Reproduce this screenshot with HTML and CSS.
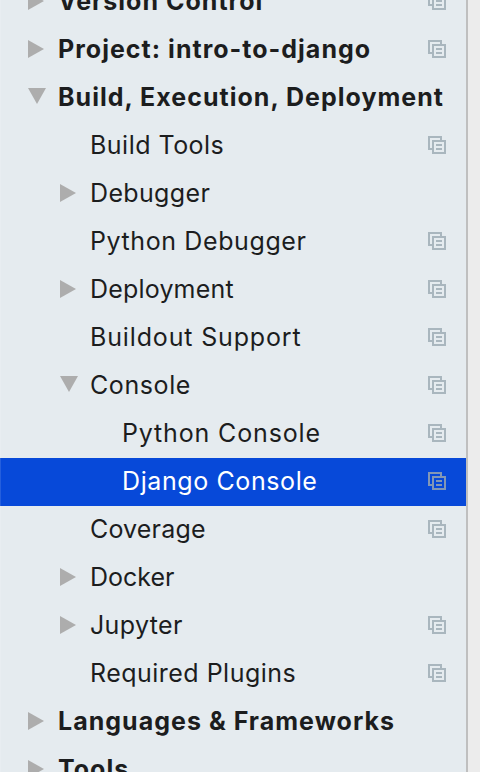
FILE: index.html
```
<!DOCTYPE html>
<html lang="en">
<head>
<meta charset="utf-8">
<title>Settings</title>
<link rel="stylesheet" href="styles.css">
</head>
<body>
<svg class="defs" aria-hidden="true">
<symbol id="copy" viewBox="0 0 18 18"><path d="M4 13H1V1H13V4" /><path d="M5 5H17V17H5Z" /><path d="M8 9H14M8 13H14" /></symbol>
<symbol id="right" viewBox="0 0 16 18"><path d="M0 0L16 9L0 18Z" /></symbol>
<symbol id="down" viewBox="0 0 18 16"><path d="M0 0H18L9 16Z" /></symbol>
</svg>
<div class="window">
<nav class="tree">
<div class="row group"><svg class="right"><use href="#right"/></svg><span class="label">Version Control</span><svg class="copy"><use href="#copy"/></svg></div>
<div class="row group"><svg class="right"><use href="#right"/></svg><span class="label">Project: intro-to-django</span><svg class="copy"><use href="#copy"/></svg></div>
<div class="row group"><svg class="down"><use href="#down"/></svg><span class="label">Build, Execution, Deployment</span></div>
<div class="row item"><span class="label">Build Tools</span><svg class="copy"><use href="#copy"/></svg></div>
<div class="row item"><svg class="right"><use href="#right"/></svg><span class="label snug">Debugger</span></div>
<div class="row item"><span class="label roomy">Python Debugger</span><svg class="copy"><use href="#copy"/></svg></div>
<div class="row item"><svg class="right"><use href="#right"/></svg><span class="label tight">Deployment</span><svg class="copy"><use href="#copy"/></svg></div>
<div class="row item"><span class="label wide">Buildout Support</span><svg class="copy"><use href="#copy"/></svg></div>
<div class="row item"><svg class="down"><use href="#down"/></svg><span class="label roomy">Console</span><svg class="copy"><use href="#copy"/></svg></div>
<div class="row leaf"><span class="label wide">Python Console</span><svg class="copy"><use href="#copy"/></svg></div>
<div class="row leaf selected"><span class="label roomy">Django Console</span><svg class="copy"><use href="#copy"/></svg></div>
<div class="row item"><span class="label tight">Coverage</span><svg class="copy"><use href="#copy"/></svg></div>
<div class="row item"><svg class="right"><use href="#right"/></svg><span class="label flush">Docker</span></div>
<div class="row item"><svg class="right"><use href="#right"/></svg><span class="label snug">Jupyter</span><svg class="copy"><use href="#copy"/></svg></div>
<div class="row item"><span class="label">Required Plugins</span><svg class="copy"><use href="#copy"/></svg></div>
<div class="row group"><svg class="right"><use href="#right"/></svg><span class="label">Languages &amp; Frameworks</span></div>
<div class="row group"><svg class="right"><use href="#right"/></svg><span class="label">Tools</span></div>
</nav>
</div>
</body>
</html>
```
FILE: styles.css
```
body { margin: 0; background: #ececec; font-family: Inter, sans-serif; color: #1c1d1e; }
.defs { display: none; }
.window { height: 772px; overflow: hidden; }
.tree { width: 466px; height: 795px; margin-top: -22px; background: #e5ebef; border-right: 2px solid #bfbfbf; }
.row { position: relative; box-sizing: border-box; display: flex; align-items: center; height: 48px; padding-bottom: 2px; font-size: 25px; letter-spacing: 0.48px; white-space: nowrap; box-shadow: inset 1px 0 rgba(255, 255, 255, 0.12); }
.group { padding-left: 58px; font-weight: 700; letter-spacing: 1.02px; }
.item { padding-left: 90px; }
.leaf { padding-left: 122px; }
.label { line-height: 46px; }
.flush { letter-spacing: 0; }
.tight { letter-spacing: 0.18px; }
.snug { letter-spacing: 0.35px; }
.roomy { letter-spacing: 0.6px; }
.wide { letter-spacing: 0.85px; }
.right, .down { position: absolute; top: 14px; left: 28px; fill: #adadad; }
.right { width: 16px; height: 18px; }
.down { width: 18px; height: 16px; }
.item .right, .item .down { left: 60px; }
.copy { width: 18px; height: 18px; margin-left: auto; margin-right: 20px; fill: none; stroke: #a9b6be; stroke-width: 2; }
.selected { background: #0749d9; color: #fff; }
.selected .copy { stroke: #8297b6; }
```
